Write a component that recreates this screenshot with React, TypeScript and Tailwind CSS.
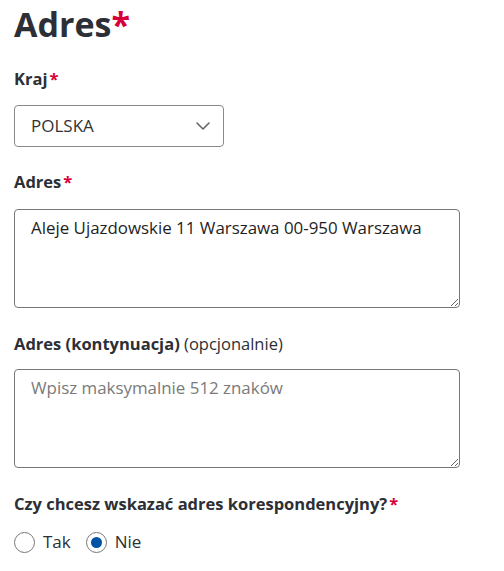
import { ChevronDown } from "lucide-react";

const FONT = "font-['Open_Sans',sans-serif]";

function Req() {
  return <span className="ml-[2px] text-[#d6003b]">*</span>;
}

function Label({ children }: { children: React.ReactNode }) {
  return (
    <div className="text-[16.5px] leading-[24px] font-bold text-[#2c2f35]">{children}</div>
  );
}

function Radio({ label, checked }: { label: string; checked?: boolean }) {
  return (
    <label className="flex items-center gap-[8px]">
      <span className="flex h-[21px] w-[21px] items-center justify-center rounded-full border border-[#767676] bg-white">
        {checked && <span className="h-[11px] w-[11px] rounded-full bg-[#0052a5]" />}
      </span>
      <span className="text-[17px] leading-[24px] text-[#2c2f35]">{label}</span>
    </label>
  );
}

export default function App() {
  return (
    <div className={`${FONT} min-h-[571px] w-[504px] bg-white px-[14px] pt-[4px] text-[#222]`}>
      <h1 className="text-[34px] leading-[40px] font-bold text-[#2c2f36]">
        Adres<span className="text-[#d6003b]">*</span>
      </h1>

      <div className="mt-[23px]">
        <Label>
          Kraj<Req />
        </Label>
        <div className="mt-[14px] flex h-[42px] w-[210px] items-center justify-between rounded-[4px] border border-[#8a8a8a] pl-[16px] pr-[8px]">
          <span className="text-[17px] text-[#333]">POLSKA</span>
          <ChevronDown size={24} strokeWidth={1.6} className="text-[#666]" />
        </div>
      </div>

      <div className="mt-[23px]">
        <Label>
          Adres<Req />
        </Label>
        <textarea
          readOnly
          defaultValue="Aleje Ujazdowskie 11 Warszawa 00-950 Warszawa"
          className="mt-[15px] block h-[99px] w-[446px] rounded-[4px] border border-[#777] px-[16px] pt-[6px] text-[16.9px] leading-[24px] text-[#1e1e1e] outline-none"
        />
      </div>

      <div className="mt-[24px]">
        <Label>
          Adres (kontynuacja) <span className="font-normal">(opcjonalnie)</span>
        </Label>
        <textarea
          placeholder="Wpisz maksymalnie 512 znaków"
          className="mt-[13px] block h-[99px] w-[446px] rounded-[4px] border border-[#777] px-[16px] pt-[6px] text-[16.9px] leading-[24px] text-[#1e1e1e] outline-none placeholder:text-[#7a7a7a]"
        />
      </div>

      <div className="mt-[24px]">
        <Label>
          Czy chcesz wskazać adres korespondencyjny?<Req />
        </Label>
        <div className="mt-[14px] flex items-center gap-[15px]">
          <Radio label="Tak" />
          <Radio label="Nie" checked />
        </div>
      </div>
    </div>
  );
}
